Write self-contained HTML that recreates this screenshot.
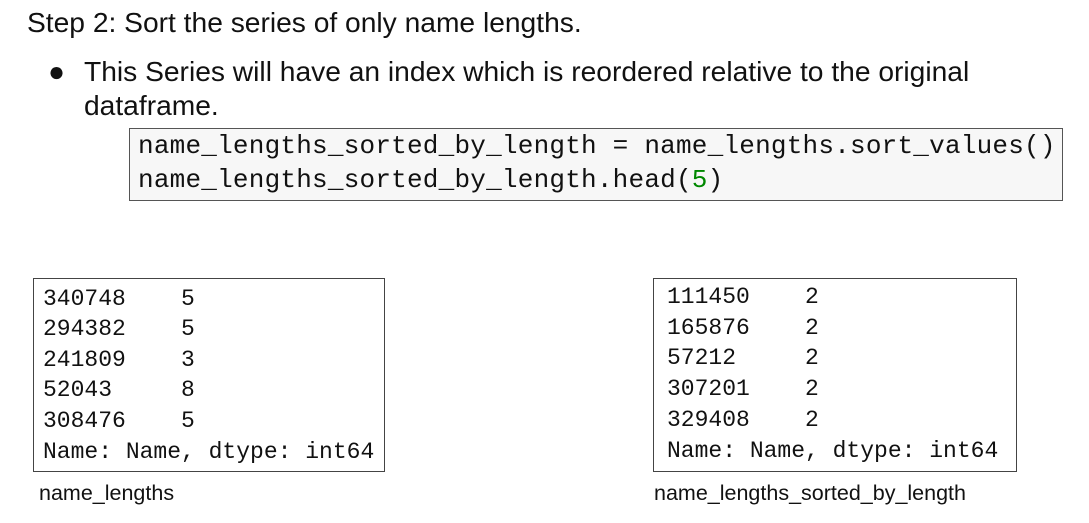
<!DOCTYPE html><html><head><style>
body{margin:0;width:1089px;height:523px;background:#fff;position:relative;font-family:"Liberation Sans",sans-serif;color:#111;overflow:hidden}
.a{position:absolute;white-space:pre}
.h{font-size:28.2px}
.code{position:absolute;left:129px;top:128px;width:932px;height:71px;border:1px solid #555;background:#f7f7f7;font-family:"Liberation Mono",monospace;font-size:26px;letter-spacing:0.22px}
.code div{position:absolute;left:8px;white-space:pre}
.box{position:absolute;top:278px;height:192px;border:1px solid #444;font-family:"Liberation Mono",monospace;font-size:23px}
.box div{position:absolute;left:9px;white-space:pre;line-height:30px}
.cap{font-size:21.5px}
</style></head><body>
<div class="a h" style="left:27px;top:6px">Step 2: Sort the series of only name lengths.</div>
<div class="a h" style="left:48px;top:55px">●</div>
<div class="a h" style="left:84px;top:55px">This Series will have an index which is reordered relative to the original</div>
<div class="a h" style="left:84px;top:89px">dataframe.</div>
<div class="code"><div style="top:2px">name_lengths_sorted_by_length = name_lengths.sort_values()</div><div style="top:36px">name_lengths_sorted_by_length.head(<span style="color:#080">5</span>)</div></div>
<div class="box" style="left:33px;width:350px">
<div style="top:5px">340748    5</div><div style="top:35px">294382    5</div><div style="top:66px">241809    3</div><div style="top:96px">52043     8</div><div style="top:127px">308476    5</div><div style="top:158px">Name: Name, dtype: int64</div></div>
<div class="box" style="left:653px;width:362px">
<div style="top:3px;left:13px">111450    2</div><div style="top:34px;left:13px">165876    2</div><div style="top:64px;left:13px">57212     2</div><div style="top:95px;left:13px">307201    2</div><div style="top:126px;left:13px">329408    2</div><div style="top:157px;left:13px">Name: Name, dtype: int64</div></div>
<div class="a cap" style="left:39px;top:481px">name_lengths</div>
<div class="a cap" style="left:654px;top:481px">name_lengths_sorted_by_length</div>
</body></html>
